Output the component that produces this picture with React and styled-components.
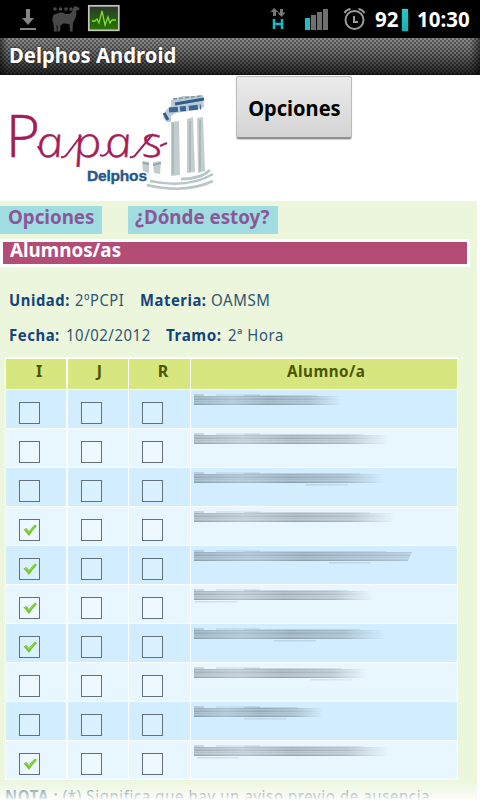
import React from "react";
import styled, { createGlobalStyle } from "styled-components";

const GlobalStyle = createGlobalStyle`
  body{
    margin: 0;
    background: #fff;
    font-family: "Noto Sans", "Open Sans", sans-serif;
    overflow: hidden;
  }
`
const Screen = styled.div`
  width: 480px;
  height: 800px;
  display: flex;
  flex-direction: column;
  overflow: hidden;
  position: relative;
`
const Squeeze = styled.span`
  display: inline-block;
  transform: scaleX(${(p) => p.$x});
  transform-origin: ${(p) => p.$origin || "left"} center;
`
const StatusBar = styled.header`
  height: 38px;
  flex: none;
  background: #000;
  color: #fff;
  display: flex;
  justify-content: space-between;
  svg{
    display: block;
    flex: none;
  }
`
const StatusRight = styled.div`
  width: 214px;
  display: flex;
  align-items: center;
`
const Clock = styled.span`
  flex: none;
  width: ${(p) => p.$width}px;
  font-size: 20.5px;
  line-height: 38px;
  font-weight: 700;
  white-space: nowrap;
`
const Battery = styled.i`
  width: 6px;
  height: 22px;
  flex: none;
  margin: 1px 9px 0 0;
  background: linear-gradient(#8aa 0, #25c3c8 3px, #19aeb4 100%);
  box-shadow: 0 0 2px #087;
`
const TitleBar = styled.div`
  height: 37px;
  flex: none;
  box-sizing: border-box;
  padding-left: 9px;
  color: #fff;
  font-size: 21px;
  line-height: 35px;
  font-weight: 700;
  text-shadow: 0 0 3px #222;
  background:
    linear-gradient(90deg, rgba(0,0,0,.5), transparent 8px, transparent 470px, rgba(0,0,0,.5)),
    linear-gradient(rgba(255,255,255,.12), rgba(0,0,0,.1) 40%, rgba(0,0,0,.7)),
    repeating-conic-gradient(#484848 0 25%, #7c7c7c 0 50%) 0 0 / 4px 4px;
  border-bottom: 1px solid #111;
`
const Banner = styled.div`
  height: 126px;
  flex: none;
  display: flex;
  align-items: flex-start;
  svg{
    display: block;
    flex: none;
  }
`
const OptionsButton = styled.button`
  width: 116px;
  height: 63px;
  margin: 1px 0 0 6px;
  padding: 1px 0 0 0;
  border: 1px solid #bbb;
  border-bottom: 2px solid #909090;
  border-radius: 3px;
  background: linear-gradient(#ebebeb, #d4d4d4);
  box-shadow: 0 1px 1px #ccc;
  color: #000;
  font: 700 21px "Noto Sans", sans-serif;
  white-space: nowrap;
`
const Page = styled.main`
  width: 477px;
  flex: 1;
  min-height: 0;
  background: #ebf6dd;
`
const Tabs = styled.nav`
  display: flex;
  gap: 26px;
  padding-top: 5px;
  height: 33px;
`
const Tab = styled.a`
  width: ${(p) => p.$width}px;
  height: 28px;
  box-sizing: border-box;
  padding-left: ${(p) => p.$pad}px;
  background: #a1dde0;
  color: #8a5799;
  font-size: 20px;
  line-height: 22px;
  font-weight: 700;
  white-space: nowrap;
`
const Heading = styled.h1`
  width: 470px;
  height: 28px;
  box-sizing: border-box;
  margin: 0;
  padding-left: 7px;
  border: 3px solid #fff;
  background: #b44d76;
  color: #fff;
  font-size: 20px;
  line-height: 16px;
  font-weight: 700;
`
const Info = styled.div`
  padding: 15px 0 0 9px;
  height: 75px;
  box-sizing: border-box;
  margin-bottom: 15px;
`
const InfoLine = styled.div`
  display: flex;
  height: 35px;
  align-items: center;
  font-size: 16px;
  white-space: nowrap;
`
const Field = styled.span`
  width: ${(p) => p.$width}px;
  flex: none;
  font-weight: ${(p) => (p.$bold ? 700 : 400)};
  color: ${(p) => (p.$bold ? "#12447a" : "#31546f")};
  letter-spacing: 0.6px;
`
const Table = styled.div`
  width: 453px;
  height: 423px;
  box-sizing: border-box;
  margin: 0 0 0 5px;
  padding: 2px 2px 1px 1px;
  display: grid;
  grid-template-rows: 30px repeat(10, 38px);
  row-gap: 1px;
  background: #fcfefa;
`
const Row = styled.div`
  display: grid;
  grid-template-columns: 60px 60px 60px 265px;
  column-gap: 2px;
  > *{
    box-sizing: border-box;
  }
  > *:nth-child(3){
    margin-left: -1px;
  }
  > *:nth-child(4){
    margin-left: -1px;
  }
`
const HeadCell = styled.div`
  background: #d7e67e;
  color: #4b5606;
  font-size: 16px;
  line-height: 25px;
  font-weight: 700;
  text-align: center;
  padding-left: ${(p) => p.$pad || 0}px;
  letter-spacing: ${(p) => p.$spacing || "0"};
`
const Cell = styled.div`
  background: ${(p) => (p.$light ? "#e8f6ff" : "#d1edff")};
  padding: ${(p) => p.$pad};
  svg{
    display: block;
  }
`
const Box = styled.div`
  width: 21px;
  height: 22px;
  box-sizing: border-box;
  border: 1px solid #64717b;
  background: ${(p) => (p.$light ? "#eef8ff" : "#daf1ff")};
`
const Note = styled.p`
  margin: 0;
  padding: 5px 0 0 5px;
  color: #55788a;
  font-size: 16px;
  line-height: 22px;
  letter-spacing: 0.7px;
  white-space: nowrap;
`
const BottomFade = styled.div`
  position: absolute;
  left: 0;
  right: 0;
  bottom: 0;
  height: 20px;
  background: linear-gradient(rgba(255,255,255,0), rgba(255,255,255,.7) 85%, #fff);
`

const rows = [
  { width: 149, checked: false, under: 0 },
  { width: 196, checked: false, under: 0 },
  { width: 192, checked: false, under: 112 },
  { width: 202, checked: true, under: 0 },
  { width: 218, checked: true, under: 135 },
  { width: 180, checked: true, under: 1 },
  { width: 192, checked: true, under: 80 },
  { width: 174, checked: false, under: 116 },
  { width: 130, checked: false, under: 50 },
  { width: 196, checked: true, under: 3 },
]

const StatusIcons = () => (
  <svg width="130" height="38" viewBox="0 0 130 38">
    <path d="M26 9h4v9h4l-6 7-6-7h4zM20 28h16v2H20z" fill="#858585" />
    <g fill="#484848">
      <circle cx="55" cy="9" r="1.8" />
      <circle cx="60.5" cy="9" r="1.8" />
      <circle cx="66" cy="9" r="1.8" />
      <circle cx="71" cy="9" r="1.8" />
      <path d="M73.500 8l1-2 2 .5 3 1.500-.5 2-2.500.5q0 5-1.500 8.500l-2 3.500-.5 9h-2.500l-.5-7.500-6-.5-3 2-.5 6h-2.500v-6l-1 0 .5 6h-3l-.5-8-1-2q-1-8 5-8 4-2 8 .5 4 .5 6-1.500z" />
    </g>
    <defs>
      <linearGradient id="monitor" x1="0" y1="0" x2="0" y2="1">
        <stop offset="0" stopColor="#2b382b" />
        <stop offset="1" stopColor="#277800" />
      </linearGradient>
    </defs>
    <rect x="88.8" y="5.8" width="30" height="24.5" fill="url(#monitor)" stroke="#c5c5c5" strokeWidth="1.7" />
    <path d="M92 21h3l2-2 2 4 3-12 3 14 3-8 2 6 2-3h4" fill="none" stroke="#80e03a" strokeWidth="1.3" />
  </svg>
)

const SignalIcons = () => (
  <svg width="109" height="38" viewBox="266 0 109 38">
    <path d="M274 8l4.500 4h-2.500v4h-3v-4h-2.500zM281.500 17l-4-4.500h2.500v-3.500h3v3.500h2.500z" fill="#777" />
    <path d="M274 19v10M282 19v10M274 24h8" stroke="#16bcc3" strokeWidth="2.5" />
    <path d="M305 18h5v12h-5z" fill="#1dbec3" />
    <path d="M311 15h5v15h-5zM317 12h5v18h-5zM323 9h5v21h-5z" fill="#707070" />
    <g fill="none" stroke="#9b9b9b" strokeWidth="2">
      <circle cx="354.5" cy="20" r="9" />
      <path d="M354 16v6h4M344.500 13q2-3.500 6-4M364.500 13q-2-3.500-6-4" />
    </g>
  </svg>
)

const Logo = () => (
  <svg width="230" height="126" viewBox="0 75 230 126">
    <g fill="#c3cdd0">
      <path d="M171 122l8-1 1 54-9 1zM187 119l6-2 2 55-8 1zM197 118l6-1 2 54-7 2z" />
      <path d="M142 161l7 1 0 11-6-2zM153 162l8-1-1 13-6-1z" />
    </g>
    <path d="M173 123v51M190 121v51M200 120v51" stroke="#a3b2b4" strokeWidth="1.5" />
    <path d="M143 163l6 1M153 165l8-2" stroke="#91a7ad" strokeWidth="2" />
    <path d="M181 179q20 0 29-9M150 181q38 8 63-7M147 185q38 9 66-4" fill="none" stroke="#b8c5c9" strokeWidth="2.5" />
    <path d="M163 118l3-8 5-4 0-6 6-2 6-2 12 0 8-1 1 12-8 3-20 3-5 3 0 6-4 0z" fill="#bccbd5" />
    <path d="M175 104l29-5M164 113l4 7" stroke="#315d8c" strokeWidth="3" />
    <path d="M169 110l32-3" stroke="#3b668f" strokeWidth="5" strokeDasharray="9 2 6 3" />
    <path d="M173 99l29-3" stroke="#819a9f" strokeWidth="1.5" strokeDasharray="4 2" />
    <text fontFamily="Open Sans, Noto Sans, sans-serif" fontWeight="300" fill="#a51d58" stroke="#a51d58" strokeWidth=".6" fontSize="58" x="6" y="157">P</text>
    <g transform="translate(0 157) skewX(10) scale(1.15 1)" fill="#a51d58" stroke="#a51d58" strokeWidth=".5" fontFamily="Open Sans, Noto Sans, sans-serif" fontWeight="300" fontStyle="italic">
      <text fontSize="42" x="33.500 66 93 125">apas</text>
    </g>
    <path d="M61 157q4 1 7-4L81 136M100 155q6 3 10-7M130 157q4 1 7-4L153 134M38 146q1 4 4 4M160 146l7-3" fill="none" stroke="#a51d58" strokeWidth="2" />
    <text x="87" y="181" fill="#27598a" stroke="#27598a" strokeWidth=".4" fontFamily="Liberation Sans, sans-serif" fontWeight="700" fontSize="15.5" textLength="60">Delphos</text>
  </svg>
)

const CheckMark = () => (
  <svg width="19" height="19" viewBox="0 0 19 19">
    <path d="M3.500 9.500l3-1.500 2.500 3q3-4 6-6.500l2 1.500q-4 4-8 10-3-4-5.500-6.500z" fill="#76c52d" />
    <path d="M5 9.500l1.500 0 2.500 3 6-7" fill="none" stroke="#9ada55" strokeWidth="1" />
  </svg>
)

const Smear = ({ width, under, index }) => {
  const lines = [0.46, 0.34, 0.4, 0.5, 0.32, 0.4, 0.3, 0.4, 0.56]
  return (
    <svg width="240" height="18" viewBox="0 0 240 18">
      <defs>
        <linearGradient id={"smear" + index} gradientUnits="userSpaceOnUse" x1="0" y1="0" x2={width} y2="0">
          <stop offset="0" stopColor="#465158" stopOpacity=".9" />
          <stop offset=".25" stopColor="#606870" stopOpacity=".7" />
          <stop offset=".5" stopColor="#485158" stopOpacity=".9" />
          <stop offset=".78" stopColor="#596169" stopOpacity=".75" />
          <stop offset="1" stopColor="#697178" stopOpacity={index === 4 ? ".6" : "0"} />
        </linearGradient>
      </defs>
      <g fill={"url(#smear" + index + ")"}>
        <rect x="0" y="3" width="10" height="2" opacity=".22" />
        <rect x="22" y="3" width="44" height="2" opacity=".14" />
        <rect x="50" y="4" width={width - 76} height="1" opacity=".22" />
        {lines.map((opacity, i) => (
          <rect key={i} x="0" y={5 + i} width={index === 4 ? width - i / 2 : width - (i * 3) % 7} height="1" opacity={opacity} />
        ))}
        {under > 0 && <rect x={under} y="15" width="42" height="1.5" opacity=".18" />}
      </g>
    </svg>
  )
}

const App = () => {
  return (
    <Screen>
      <GlobalStyle />
      <StatusBar>
        <StatusIcons />
        <StatusRight>
          <SignalIcons />
          <Clock $width={27}>92</Clock>
          <Battery />
          <Clock $width={53}>10:30</Clock>
        </StatusRight>
      </StatusBar>
      <TitleBar><Squeeze $x={0.965}>Delphos Android</Squeeze></TitleBar>
      <Banner>
        <Logo />
        <OptionsButton><Squeeze $x={0.955} $origin="center">Opciones</Squeeze></OptionsButton>
      </Banner>
      <Page>
        <Tabs>
          <Tab $width={102} $pad={8}><Squeeze $x={0.937}>Opciones</Squeeze></Tab>
          <Tab $width={150} $pad={7}><Squeeze $x={0.937}>¿Dónde estoy?</Squeeze></Tab>
        </Tabs>
        <Heading><Squeeze $x={0.94}>Alumnos/as</Squeeze></Heading>
        <Info>
          <InfoLine>
            <Field $bold $width={66}><Squeeze $x={0.925}>Unidad:</Squeeze></Field>
            <Field $width={65}><Squeeze $x={0.92}>2ºPCPI</Squeeze></Field>
            <Field $bold $width={71}><Squeeze $x={0.925}>Materia:</Squeeze></Field>
            <Field><Squeeze $x={0.94}>OAMSM</Squeeze></Field>
          </InfoLine>
          <InfoLine>
            <Field $bold $width={57}><Squeeze $x={0.93}>Fecha:</Squeeze></Field>
            <Field $width={100}><Squeeze $x={0.93}>10/02/2012</Squeeze></Field>
            <Field $bold $width={62}><Squeeze $x={0.95}>Tramo:</Squeeze></Field>
            <Field><Squeeze $x={0.93}>2ª Hora</Squeeze></Field>
          </InfoLine>
        </Info>
        <Table>
          <Row>
            <HeadCell $pad={6}>I</HeadCell>
            <HeadCell $pad={3}>J</HeadCell>
            <HeadCell $pad={7}>R</HeadCell>
            <HeadCell $pad={4} $spacing="0.5px"><Squeeze $x={0.95} $origin="center">Alumno/a</Squeeze></HeadCell>
          </Row>
          {
            rows.map((item, index) => {
              const light = index % 2 === 1
              return (
                <Row key={index}>
                  <Cell $light={light} $pad="12px 0 0 13px">
                    <Box $light={light}>{item.checked && <CheckMark />}</Box>
                  </Cell>
                  <Cell $light={light} $pad="12px 0 0 13px"><Box $light={light} /></Cell>
                  <Cell $light={light} $pad="12px 0 0 13px"><Box $light={light} /></Cell>
                  <Cell $light={light} $pad="1px 0 0 3px">
                    <Smear width={item.width} under={item.under} index={index} />
                  </Cell>
                </Row>
              )
            })
          }
        </Table>
        <Note><Squeeze $x={0.93}><b>NOTA :</b> (*) Significa que hay un aviso previo de ausencia</Squeeze></Note>
      </Page>
      <BottomFade />
    </Screen>
  );
}

export default App;
